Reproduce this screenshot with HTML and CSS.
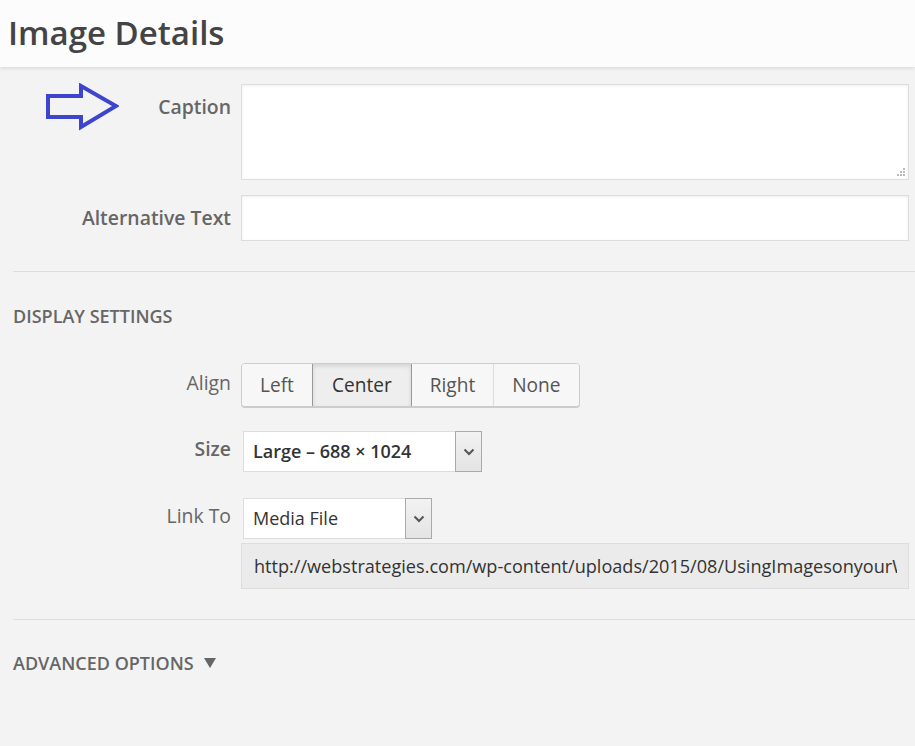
FILE: index.html
```html
<!DOCTYPE html>
<html>
<head>
<meta charset="utf-8">
<link rel="stylesheet" href="styles.css">
</head>
<body>
<header class="frame-title"><h1>Image Details</h1></header>
<main class="content">
  <div class="row caption-row">
    <label class="lbl bold">
      <svg class="arrow" width="74" height="48" viewBox="0 0 74 48"><path d="M3 13 H36 V3 L71 23 L36 44 V34 H3 Z" fill="none" stroke="#3c45cc" stroke-width="4" stroke-linejoin="miter"/></svg>
      Caption
    </label>
    <div class="textarea-wrap">
      <textarea class="field textarea"></textarea>
      <svg class="grip" width="10" height="10" viewBox="0 0 10 10"><g fill="#bbb"><rect x="7" y="0" width="2" height="2"/><rect x="4" y="3" width="2" height="2"/><rect x="7" y="3" width="2" height="2"/><rect x="1" y="6" width="2" height="2"/><rect x="4" y="6" width="2" height="2"/><rect x="7" y="6" width="2" height="2"/></g></svg>
    </div>
  </div>
  <div class="row alt-row">
    <label class="lbl bold">Alternative Text</label>
    <input class="field input" type="text">
  </div>
  <hr class="sep">
  <h2 class="section">Display Settings</h2>
  <div class="row align-row">
    <span class="lbl">Align</span>
    <div class="btn-group">
      <button class="btn">Left</button><button class="btn active">Center</button><button class="btn">Right</button><button class="btn">None</button>
    </div>
  </div>
  <div class="row size-row">
    <span class="lbl bold">Size</span>
    <div class="select size-select"><span class="sel-text bold-text">Large – 688 × 1024</span><span class="sel-arrow"><svg width="12" height="8" viewBox="0 0 12 8"><path d="M1.5 1.5 L6 6 L10.5 1.5" fill="none" stroke="#555" stroke-width="2"/></svg></span></div>
  </div>
  <div class="row link-row">
    <span class="lbl">Link To</span>
    <div class="link-col">
      <div class="select link-select"><span class="sel-text">Media File</span><span class="sel-arrow"><svg width="12" height="8" viewBox="0 0 12 8"><path d="M1.5 1.5 L6 6 L10.5 1.5" fill="none" stroke="#555" stroke-width="2"/></svg></span></div>
      <div class="url"><span class="url-text">http://webstrategies.com/wp-content/uploads/2015/08/UsingImagesonyourW</span></div>
    </div>
  </div>
  <hr class="sep sep2">
  <h2 class="section adv">Advanced Options <span class="tri"></span></h2>
</main>
</body>
</html>
```

FILE: styles.css
```css
html, body {
  margin: 0;
  padding: 0;
}
body {
  background: #f3f3f3;
  font-family: "Open Sans", "Liberation Sans", sans-serif;
  color: #444;
  width: 915px;
  height: 746px;
  overflow: hidden;
}
.frame-title {
  background: #fcfcfc;
  height: 67px;
  box-shadow: 0 0 5px rgba(0,0,0,0.18);
  position: relative;
  z-index: 2;
}
.frame-title h1 {
  margin: 0;
  padding: 12px 0 0 8px;
  font-size: 33px;
  font-weight: 600;
  line-height: 42px;
  color: #444;
}
.content {
  padding: 17px 6px 0 13px;
}
.row {
  display: flex;
  gap: 10px;
}
.lbl {
  width: 218px;
  flex: none;
  text-align: right;
  font-size: 19.4px;
  line-height: 26px;
  color: #666;
  padding-top: 10px;
  position: relative;
}
.bold { font-weight: 600; }
.arrow {
  position: absolute;
  left: 32px;
  top: -1px;
}
.textarea-wrap {
  flex: 1;
  position: relative;
  height: 96px;
}
.field {
  box-sizing: border-box;
  width: 100%;
  border: 1px solid #ddd;
  background: #fff;
  box-shadow: inset 0 1px 3px rgba(0,0,0,0.07);
  margin: 0;
  display: block;
  outline: none;
  font: inherit;
}
.textarea {
  height: 96px;
  resize: none;
}
.grip {
  position: absolute;
  right: 3px;
  bottom: 2px;
}
.alt-row { margin-top: 15px; }
.input {
  flex: 1;
  height: 46px;
  width: auto;
}
.sep {
  border: 0;
  border-top: 1px solid #ddd;
  margin: 30px -6px 0 0;
}
.section {
  margin: 32px 0 0;
  font-size: 18px;
  font-weight: 600;
  text-transform: uppercase;
  color: #666;
  line-height: 24px;
}
.align-row { margin-top: 35px; }
.align-row .lbl { padding-top: 7px; }
.btn-group {
  display: flex;
  border: 1px solid #ccc;
  border-radius: 4px;
  background: #f7f7f7;
  box-shadow: 0 1px 0 #ccc;
  height: 44px;
  box-sizing: border-box;
  overflow: hidden;
}
.btn {
  font: inherit;
  font-size: 19.1px;
  color: #555;
  background: #f7f7f7;
  border: 0;
  border-left: 1px solid #ddd;
  padding: 0 18px;
  height: 100%;
  margin: 0;
}
.btn:first-child { border-left: 0; }
.btn.active {
  background: #eee;
  border-left: 1px solid #999;
  border-right: 1px solid #999;
  box-shadow: inset 0 2px 4px rgba(0,0,0,0.12);
  color: #333;
  padding: 0 19px;
}
.btn.active + .btn { border-left: 0; }
.size-row { margin-top: 24px; }
.size-row .lbl, .link-row .lbl { padding-top: 5px; }
.select {
  display: flex;
  box-sizing: border-box;
  height: 41px;
  border: 1px solid #ddd;
  background: #fff;
  margin-left: 2px;
}
.size-select { width: 239px; }
.link-select { width: 189px; }
.sel-text {
  flex: 1;
  font-size: 18px;
  color: #333;
  line-height: 39px;
  padding-left: 9px;
  white-space: nowrap;
}
.bold-text { font-weight: 600; }
.sel-arrow {
  width: 25px;
  flex: none;
  border: 1px solid #aaa;
  margin: -1px -1px -1px 0;
  background: linear-gradient(#f2f2f2, #e4e4e4);
  display: flex;
  align-items: center;
  justify-content: center;
}
.link-row { margin-top: 26px; }
.link-col {
  flex: 1;
  min-width: 0;
}
.url {
  box-sizing: border-box;
  margin-top: 4px;
  height: 46px;
  background: #ebebeb;
  border: 1px solid #ddd;
  font-size: 18.1px;
  color: #333;
  line-height: 44px;
  padding: 0 11px 0 12px;
  white-space: nowrap;
  overflow: hidden;
}
.url-text {
  display: block;
  overflow: hidden;
}
.sep2 { margin-top: 30px; }
.adv { margin-top: 31px; display: flex; align-items: center; gap: 10px; }
.tri {
  width: 0;
  height: 0;
  border-left: 6px solid transparent;
  border-right: 6px solid transparent;
  border-top: 10px solid #666;
}
```
